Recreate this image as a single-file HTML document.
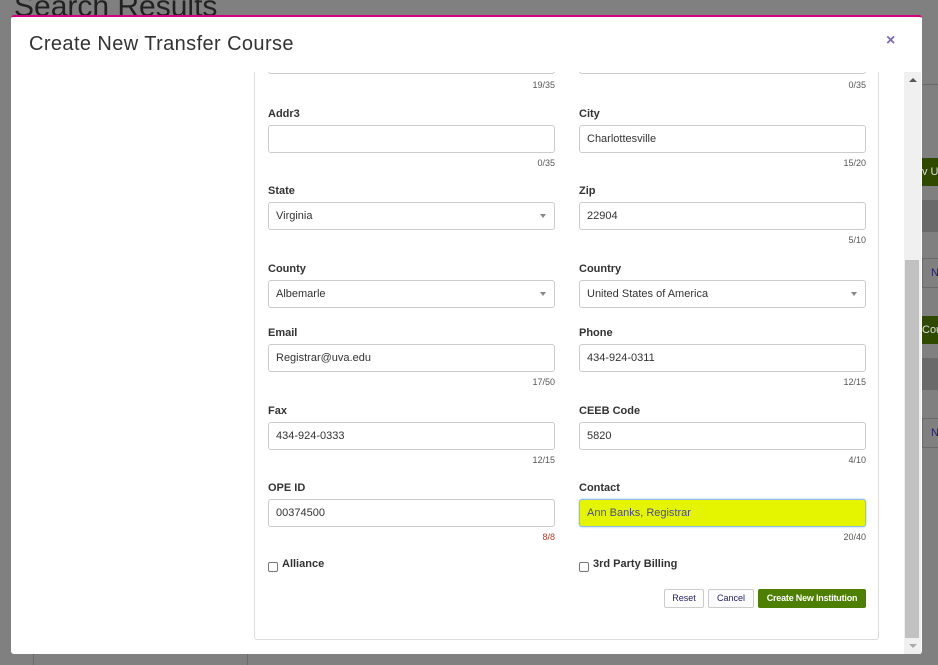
<!DOCTYPE html>
<html><head><style>
body{margin:0;width:938px;height:665px;background:#808080;position:relative;overflow:hidden;font-family:"Liberation Sans",Arial,sans-serif;}
.a{position:absolute;}
.lbl{position:absolute;font-size:11px;font-weight:bold;color:#333;}
.inp{position:absolute;height:26px;border:1px solid #ccc;border-radius:3px;background:#fff;font-size:11px;color:#333;line-height:26px;padding-left:7px;box-sizing:content-box;width:278px;}
.cnt{position:absolute;font-size:9px;color:#555;text-align:right;width:287px;}
.arr{position:absolute;right:8px;top:11px;width:0;height:0;border-left:3px solid transparent;border-right:3px solid transparent;border-top:4px solid #888;}
.cb{position:absolute;width:8px;height:8px;border:1px solid #777;border-radius:2px;background:#fff;}
.btn{position:absolute;height:17px;border:1px solid #ccc;border-radius:2px;background:#fff;color:#24206b;font-size:9px;line-height:17px;text-align:center;}
</style></head><body>
<div class="a" style="left:14px;top:-10px;font-size:30px;color:#222;font-weight:300">Search Results</div>
<div class="a" style="left:922px;top:84px;width:16px;height:1px;background:#6a6a6a"></div>
<div class="a" style="left:922px;top:158px;width:16px;height:28px;background:#2f4a00;color:#ddd;font-size:11px;line-height:28px;overflow:hidden;white-space:nowrap">v Us</div>
<div class="a" style="left:922px;top:200px;width:16px;height:32px;background:#6a6a6a"></div>
<div class="a" style="left:922px;top:258px;width:16px;height:28px;border:1px solid #6a6a6a;color:#24206b;font-size:11px;line-height:28px;padding-left:8px">N</div>
<div class="a" style="left:922px;top:316px;width:16px;height:28px;background:#2f4a00;color:#ddd;font-size:11px;line-height:28px;overflow:hidden">Cou</div>
<div class="a" style="left:922px;top:358px;width:16px;height:32px;background:#6a6a6a"></div>
<div class="a" style="left:922px;top:418px;width:16px;height:28px;border:1px solid #6a6a6a;color:#24206b;font-size:11px;line-height:28px;padding-left:8px">N</div>
<div class="a" style="left:33px;top:654px;width:1px;height:11px;background:#6a6a6a"></div>
<div class="a" style="left:247px;top:654px;width:1px;height:11px;background:#6a6a6a"></div>

<div class="a" style="left:11px;top:15px;width:911px;height:639px;background:#fff;border-top:2px solid #d6007a;border-radius:3px;box-sizing:border-box"></div>
<div class="a" style="left:29px;top:33px;font-size:20px;color:#333;font-weight:300;letter-spacing:0.4px">Create New Transfer Course</div>
<div class="a" style="left:886px;top:32px;font-size:16px;color:#7b68c8;font-weight:bold">×</div>

<div class="a" style="left:0;top:72px;width:904px;height:582px;overflow:hidden">
<div class="a" style="left:254px;top:-12px;width:625px;height:580px;border:1px solid #ddd;border-top:none;border-radius:0 0 3px 3px;box-sizing:border-box"></div>
<div class="inp" style="left:268px;top:-26px"></div>
<div class="inp" style="left:579px;top:-26px"></div>
</div>
<div class="a" style="left:904px;top:72px;width:17px;height:582px;background:#f0f0f0"></div>
<div class="a" style="left:905px;top:260px;width:14px;height:378px;background:#c1c1c1"></div>
<div class="a" style="left:909px;top:78px;border-left:4px solid transparent;border-right:4px solid transparent;border-bottom:4px solid #555;width:0;height:0"></div>
<div class="a" style="left:909px;top:644px;border-left:4px solid transparent;border-right:4px solid transparent;border-top:4px solid #aaa;width:0;height:0"></div>

<div class="cnt" style="left:268px;top:80px">19/35</div>
<div class="cnt" style="left:579px;top:80px">0/35</div>

<div class="lbl" style="left:268px;top:108px">Addr3</div>
<div class="inp" style="left:268px;top:125px"></div>
<div class="cnt" style="left:268px;top:158px">0/35</div>
<div class="lbl" style="left:579px;top:108px">City</div>
<div class="inp" style="left:579px;top:125px">Charlottesville</div>
<div class="cnt" style="left:579px;top:158px">15/20</div>

<div class="lbl" style="left:268px;top:185px">State</div>
<div class="inp" style="left:268px;top:202px">Virginia<div class="arr"></div></div>
<div class="lbl" style="left:579px;top:185px">Zip</div>
<div class="inp" style="left:579px;top:202px">22904</div>
<div class="cnt" style="left:579px;top:235px">5/10</div>

<div class="lbl" style="left:268px;top:263px">County</div>
<div class="inp" style="left:268px;top:280px">Albemarle<div class="arr"></div></div>
<div class="lbl" style="left:579px;top:263px">Country</div>
<div class="inp" style="left:579px;top:280px">United States of America<div class="arr"></div></div>

<div class="lbl" style="left:268px;top:327px">Email</div>
<div class="inp" style="left:268px;top:344px">Registrar@uva.edu</div>
<div class="cnt" style="left:268px;top:377px">17/50</div>
<div class="lbl" style="left:579px;top:327px">Phone</div>
<div class="inp" style="left:579px;top:344px">434-924-0311</div>
<div class="cnt" style="left:579px;top:377px">12/15</div>

<div class="lbl" style="left:268px;top:405px">Fax</div>
<div class="inp" style="left:268px;top:422px">434-924-0333</div>
<div class="cnt" style="left:268px;top:455px">12/15</div>
<div class="lbl" style="left:579px;top:405px">CEEB Code</div>
<div class="inp" style="left:579px;top:422px">5820</div>
<div class="cnt" style="left:579px;top:455px">4/10</div>

<div class="lbl" style="left:268px;top:482px">OPE ID</div>
<div class="inp" style="left:268px;top:499px">00374500</div>
<div class="cnt" style="left:268px;top:532px;color:#c0392b">8/8</div>
<div class="lbl" style="left:579px;top:482px">Contact</div>
<div class="inp" style="left:579px;top:499px;background:#e5f500;border:1px solid #8fbcea;box-shadow:0 0 2px #9cc8f0;color:#4a4a8a">Ann Banks, Registrar</div>
<div class="cnt" style="left:579px;top:532px">20/40</div>

<div class="cb" style="left:268px;top:562px"></div>
<div class="lbl" style="left:282px;top:558px">Alliance</div>
<div class="cb" style="left:579px;top:562px"></div>
<div class="lbl" style="left:593px;top:558px">3rd Party Billing</div>

<div class="btn" style="left:664px;top:589px;width:38px">Reset</div>
<div class="btn" style="left:708px;top:589px;width:44px;background:#fcfcff">Cancel</div>
<div class="btn" style="left:758px;top:589px;width:106px;background:#4d8000;border-color:#4d8000;color:#fff;font-weight:bold;letter-spacing:-0.2px">Create New Institution</div>
</body></html>
